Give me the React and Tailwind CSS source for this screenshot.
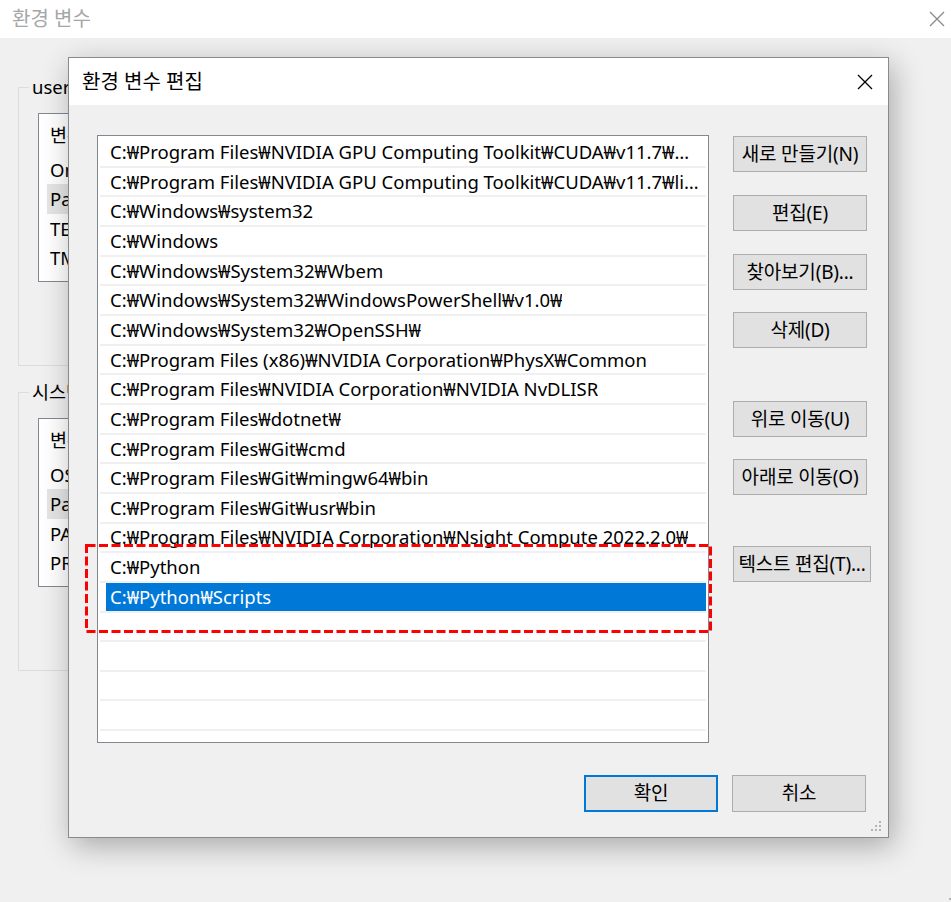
const paths = [
  'C:₩Program Files₩NVIDIA GPU Computing Toolkit₩CUDA₩v11.7₩bin',
  'C:₩Program Files₩NVIDIA GPU Computing Toolkit₩CUDA₩v11.7₩libnvvp',
  'C:₩Windows₩system32',
  'C:₩Windows',
  'C:₩Windows₩System32₩Wbem',
  'C:₩Windows₩System32₩WindowsPowerShell₩v1.0₩',
  'C:₩Windows₩System32₩OpenSSH₩',
  'C:₩Program Files (x86)₩NVIDIA Corporation₩PhysX₩Common',
  'C:₩Program Files₩NVIDIA Corporation₩NVIDIA NvDLISR',
  'C:₩Program Files₩dotnet₩',
  'C:₩Program Files₩Git₩cmd',
  'C:₩Program Files₩Git₩mingw64₩bin',
  'C:₩Program Files₩Git₩usr₩bin',
  'C:₩Program Files₩NVIDIA Corporation₩Nsight Compute 2022.2.0₩',
  'C:₩Python',
  'C:₩Python₩Scripts',
  '', '', '', '', '',
]

const userVars = ['OneDrive', 'Path', 'TEMP', 'TMP']
const sysVars = ['OS', 'Path', 'PATHEXT', 'PROCESSOR_ARCHITECTURE']

function CloseX({ className }) {
  return (
    <svg width="16" height="16" viewBox="0 0 16 16" className={className}>
      <path d="M1 1 L15 15 M15 1 L1 15" stroke="currentColor" strokeWidth="1.3" fill="none" />
    </svg>
  )
}

function Grip() {
  return (
    <svg width="12" height="12" viewBox="0 0 12 12">
      <g fill="#b4b4b4">
        <rect x="8" y="0" width="2" height="2" />
        <rect x="4" y="4" width="2" height="2" />
        <rect x="8" y="4" width="2" height="2" />
        <rect x="0" y="8" width="2" height="2" />
        <rect x="4" y="8" width="2" height="2" />
        <rect x="8" y="8" width="2" height="2" />
      </g>
    </svg>
  )
}

// background list view in the parent window (mostly hidden behind the dialog)
function VarList({ items }) {
  return (
    <div className="w-[780px] h-[169px] border border-[#828790] bg-white overflow-hidden">
      <div className="h-[41px] flex items-center pl-[11px]">변수</div>
      {items.map((v, i) => (
        <div key={v} className={`h-[29.4px] flex items-center pl-[3px] ml-[8px] ${i === 1 ? 'bg-[#e5e5e5]' : ''}`}>
          {v}
        </div>
      ))}
    </div>
  )
}

function GroupBox({ label, items, className = '' }) {
  return (
    <div className={`relative border border-[#dcdcdc] h-[279px] w-[840px] pl-[19px] pt-[25px] ${className}`}>
      <span className="absolute left-[10px] -top-[13px] bg-[#f0f0f0] px-[3px] leading-[24px] whitespace-nowrap">{label}</span>
      <VarList items={items} />
    </div>
  )
}

function Btn({ children, wide, primary, className = '' }) {
  return (
    <button
      className={`h-[36px] ${wide ? 'w-[138px]' : 'w-[134px]'} bg-[#e1e1e1] ${
        primary ? 'border-2 border-[#0078d7]' : 'border border-[#adadad]'
      } text-[19px] text-black flex items-center justify-center whitespace-nowrap tracking-[-0.2px] ${className}`}
    >
      {children}
    </button>
  )
}

export default function App() {
  return (
    <div className="relative w-[951px] h-[902px] overflow-hidden bg-[#f0f0f0] text-black text-[18.5px] font-['Noto_Sans','Noto_Sans_CJK_KR',sans-serif]">
      {/* parent window */}
      <header className="h-[38px] bg-white flex items-center justify-between pl-[12px] pr-[6px]">
        <span className="text-[20px] text-[#a6a6a6]">환경 변수</span>
        <CloseX className="text-[#8a8a8a]" />
      </header>
      <main className="pl-[18px] pt-[49px]">
        <GroupBox label="user에 대한 사용자 변수" items={userVars} />
        <GroupBox label="시스템 변수" items={sysVars} className="mt-[26px]" />
      </main>

      {/* edit dialog */}
      <section className="absolute left-[68px] top-[57px] w-[821px] h-[781px] border border-[#8a8a8a] bg-[#f0f0f0] flex flex-col shadow-[4px_8px_28px_rgba(0,0,0,0.3)]">
        <div className="h-[47px] bg-white flex items-center justify-between pl-[13px] pr-[15px]">
          <span className="text-[20px]">환경 변수 편집</span>
          <CloseX className="text-black" />
        </div>
        <div className="flex pl-[28px] pt-[30px] gap-[24px]">
          <div className="w-[612px] h-[608px] border border-[#828790] bg-white overflow-hidden pt-[2px]">
            {paths.map((p, i) => (
              <div key={i} className="h-[29.66px] mx-[2px] border-b-2 border-[#f0f0f0] flex">
                <div
                  className={`ml-[6px] flex-1 min-w-0 pl-[4px] pr-[6px] flex items-center ${
                    i === 15 ? 'bg-[#0078d7] text-white' : ''
                  }`}
                >
                  <span className="truncate">{p}</span>
                </div>
              </div>
            ))}
          </div>
          <div className="flex flex-col pt-[1px]">
            <Btn>새로 만들기(N)</Btn>
            <Btn className="mt-[23px]">편집(E)</Btn>
            <Btn className="mt-[23px]">찾아보기(B)...</Btn>
            <Btn className="mt-[22px]">삭제(D)</Btn>
            <Btn className="mt-[53px]">위로 이동(U)</Btn>
            <Btn className="mt-[22px]">아래로 이동(O)</Btn>
            <Btn wide className="mt-[51px]">텍스트 편집(T)...</Btn>
          </div>
        </div>
        <div className="flex justify-end gap-[14px] pr-[22px] pt-[32px]">
          <Btn primary className="h-[37px]">확인</Btn>
          <Btn className="h-[37px]">취소</Btn>
        </div>
        <div className="absolute right-[5px] bottom-[4px]">
          <Grip />
        </div>
      </section>

      {/* highlight annotation */}
      <svg className="absolute left-[85px] top-[544px]" width="627" height="89">
        <rect x="1.5" y="1.5" width="624" height="86" fill="none" stroke="#ff0000" strokeWidth="3" strokeDasharray="9 3.5" />
      </svg>

      <div className="absolute right-[-6px] bottom-[-4px]">
        <Grip />
      </div>
    </div>
  )
}
